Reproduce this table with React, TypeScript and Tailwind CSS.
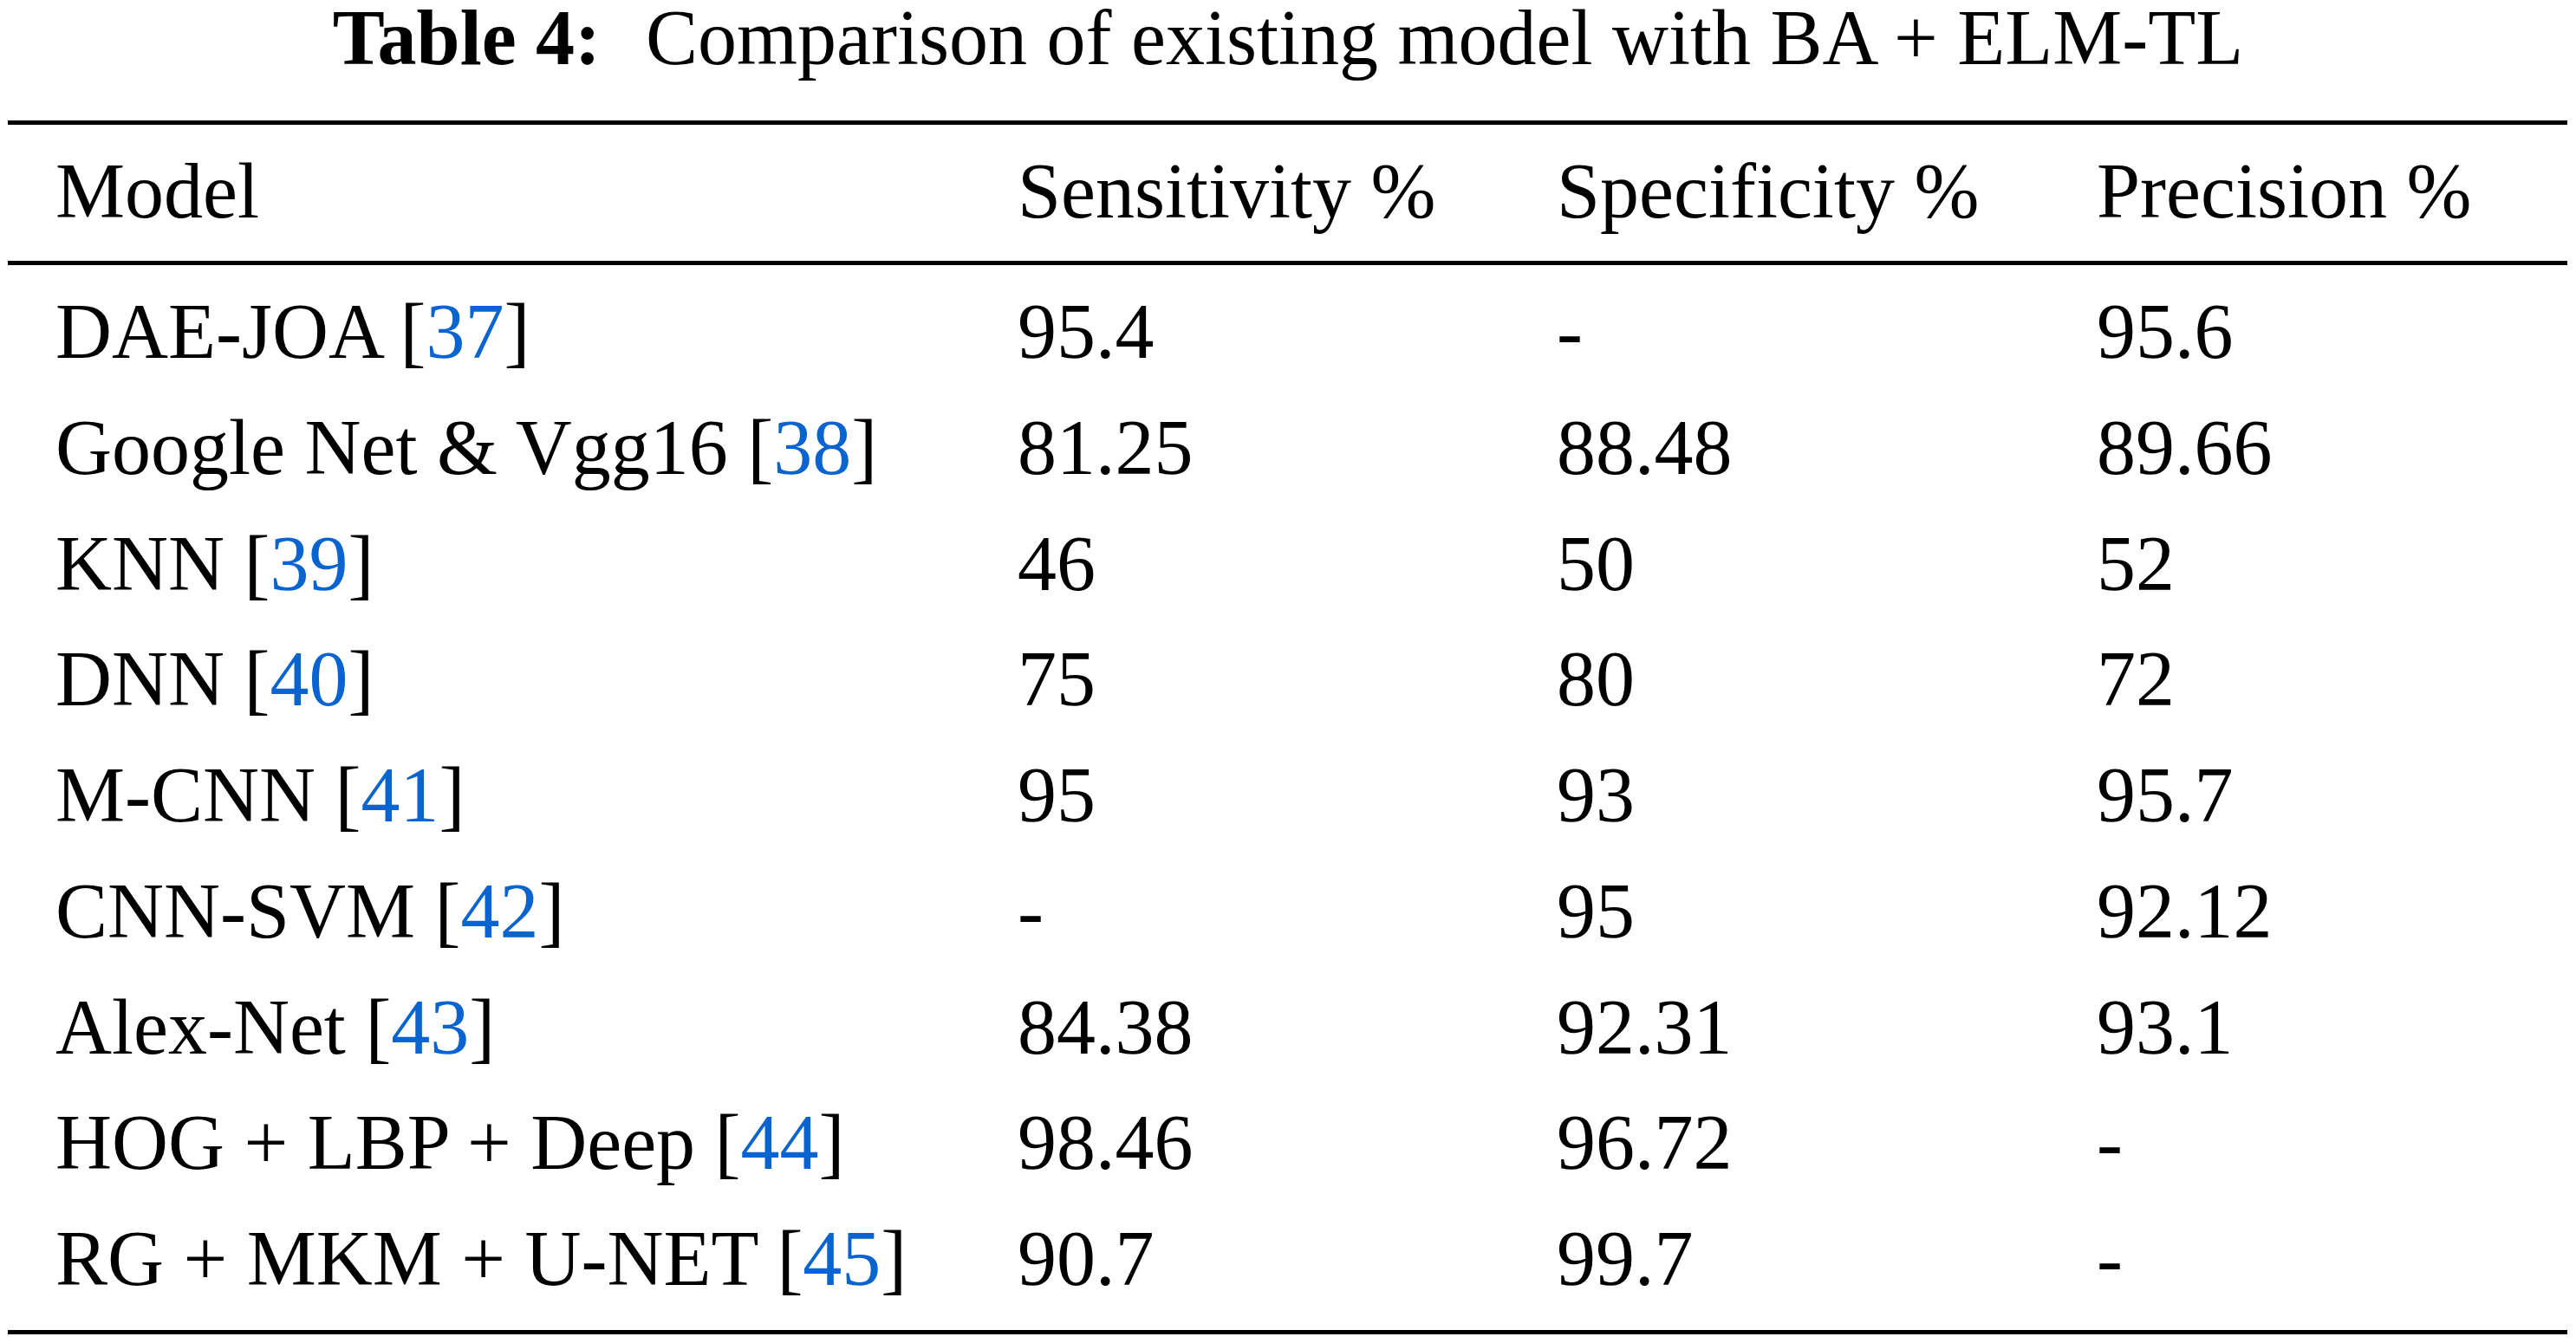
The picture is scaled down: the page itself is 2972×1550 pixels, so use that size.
const ROWS: { model: string; ref: string; sens: string; spec: string; prec: string }[] = [
  { model: 'DAE-JOA', ref: '37', sens: '95.4', spec: '-', prec: '95.6' },
  { model: 'Google Net & Vgg16', ref: '38', sens: '81.25', spec: '88.48', prec: '89.66' },
  { model: 'KNN', ref: '39', sens: '46', spec: '50', prec: '52' },
  { model: 'DNN', ref: '40', sens: '75', spec: '80', prec: '72' },
  { model: 'M-CNN', ref: '41', sens: '95', spec: '93', prec: '95.7' },
  { model: 'CNN-SVM', ref: '42', sens: '-', spec: '95', prec: '92.12' },
  { model: 'Alex-Net', ref: '43', sens: '84.38', spec: '92.31', prec: '93.1' },
  { model: 'HOG + LBP + Deep', ref: '44', sens: '98.46', spec: '96.72', prec: '-' },
  { model: 'RG + MKM + U-NET', ref: '45', sens: '90.7', spec: '99.7', prec: '-' },
];

const COLS = 'grid grid-cols-[1165px_622px_623px_1fr]';

export default function App() {
  return (
    <div className="w-[2972px] min-h-[1550px] bg-white text-black font-['Liberation_Serif','Times_New_Roman',serif] text-[90px]">
      {/* Caption */}
      <div className="flex justify-center leading-[88px] whitespace-nowrap">
        <span className="font-bold">Table 4:</span>
        <span className="ml-[52px]">Comparison of existing model with BA + ELM-TL</span>
      </div>

      {/* Table */}
      <div className="ml-[9px] w-[2953px] mt-[51px] border-t-[5px] border-b-[5px] border-black">
        <div className={`${COLS} border-b-[5px] border-black pt-[32px] pb-[35px] leading-[90px] whitespace-nowrap`}>
          <div className="pl-[55px]">Model</div>
          <div>Sensitivity %</div>
          <div>Specificity %</div>
          <div>Precision %</div>
        </div>

        <div className="pt-[10px] pb-[15px]">
          {ROWS.map(r => (
            <div key={r.ref} className={`${COLS} leading-[133.75px] whitespace-nowrap`}>
              <div className="pl-[55px]">
                {r.model} [<span className="text-[#0a64d0]">{r.ref}</span>]
              </div>
              <div>{r.sens}</div>
              <div>{r.spec}</div>
              <div>{r.prec}</div>
            </div>
          ))}
        </div>
      </div>
    </div>
  );
}
